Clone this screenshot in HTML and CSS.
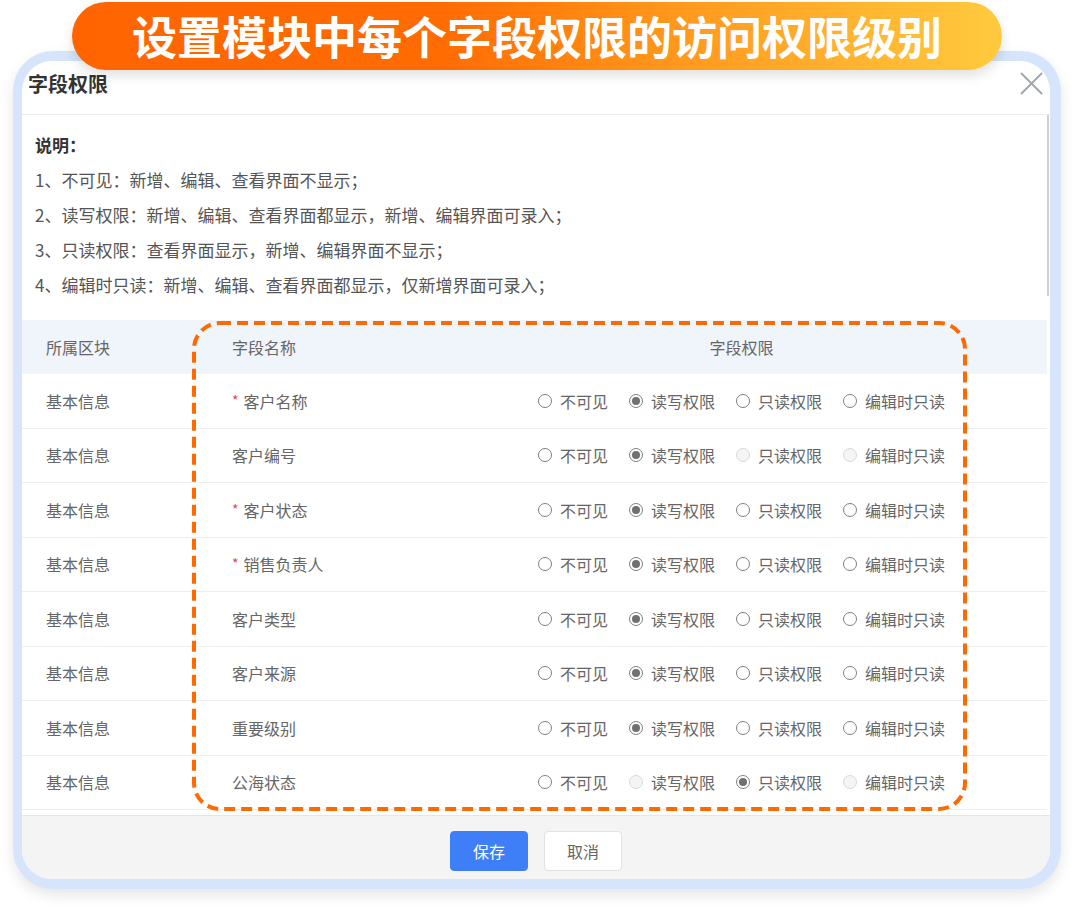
FILE: index.html
```html
<!DOCTYPE html>
<html lang="zh-CN">
<head>
<meta charset="utf-8">
<title>字段权限</title>
<link rel="stylesheet" href="styles.css">
</head>
<body>
<div class="stage">
  <div class="frame">
    <div class="dialog">
      <div class="dlg-head">
        <span class="dlg-title">字段权限</span>
        <svg class="close" viewBox="0 0 24 24"><path d="M2 1 L23 22 M23 1 L2 22" stroke="#a0a4ab" stroke-width="1.8" fill="none"/></svg>
      </div>
      <div class="dlg-body">
        <div class="scroll">
          <div class="desc">
            <div class="desc-title">说明：</div>
            <div>1、不可见：新增、编辑、查看界面不显示；</div>
            <div>2、读写权限：新增、编辑、查看界面都显示，新增、编辑界面可录入；</div>
            <div>3、只读权限：查看界面显示，新增、编辑界面不显示；</div>
            <div>4、编辑时只读：新增、编辑、查看界面都显示，仅新增界面可录入；</div>
          </div>
          <div class="table">
            <div class="tr th">
              <div class="c1">所属区块</div>
              <div class="c2">字段名称</div>
              <div class="c3 center">字段权限</div>
            </div>
            <div class="tr">
              <div class="c1">基本信息</div>
              <div class="c2"><span class="req">*</span>客户名称</div>
              <div class="c3">
                <span class="radio"><i class="dot"></i>不可见</span>
                <span class="radio"><i class="dot on"></i>读写权限</span>
                <span class="radio"><i class="dot"></i>只读权限</span>
                <span class="radio"><i class="dot"></i>编辑时只读</span>
              </div>
            </div>
            <div class="tr">
              <div class="c1">基本信息</div>
              <div class="c2">客户编号</div>
              <div class="c3">
                <span class="radio"><i class="dot"></i>不可见</span>
                <span class="radio"><i class="dot on"></i>读写权限</span>
                <span class="radio"><i class="dot off"></i>只读权限</span>
                <span class="radio"><i class="dot off"></i>编辑时只读</span>
              </div>
            </div>
            <div class="tr">
              <div class="c1">基本信息</div>
              <div class="c2"><span class="req">*</span>客户状态</div>
              <div class="c3">
                <span class="radio"><i class="dot"></i>不可见</span>
                <span class="radio"><i class="dot on"></i>读写权限</span>
                <span class="radio"><i class="dot"></i>只读权限</span>
                <span class="radio"><i class="dot"></i>编辑时只读</span>
              </div>
            </div>
            <div class="tr">
              <div class="c1">基本信息</div>
              <div class="c2"><span class="req">*</span>销售负责人</div>
              <div class="c3">
                <span class="radio"><i class="dot"></i>不可见</span>
                <span class="radio"><i class="dot on"></i>读写权限</span>
                <span class="radio"><i class="dot"></i>只读权限</span>
                <span class="radio"><i class="dot"></i>编辑时只读</span>
              </div>
            </div>
            <div class="tr">
              <div class="c1">基本信息</div>
              <div class="c2">客户类型</div>
              <div class="c3">
                <span class="radio"><i class="dot"></i>不可见</span>
                <span class="radio"><i class="dot on"></i>读写权限</span>
                <span class="radio"><i class="dot"></i>只读权限</span>
                <span class="radio"><i class="dot"></i>编辑时只读</span>
              </div>
            </div>
            <div class="tr">
              <div class="c1">基本信息</div>
              <div class="c2">客户来源</div>
              <div class="c3">
                <span class="radio"><i class="dot"></i>不可见</span>
                <span class="radio"><i class="dot on"></i>读写权限</span>
                <span class="radio"><i class="dot"></i>只读权限</span>
                <span class="radio"><i class="dot"></i>编辑时只读</span>
              </div>
            </div>
            <div class="tr">
              <div class="c1">基本信息</div>
              <div class="c2">重要级别</div>
              <div class="c3">
                <span class="radio"><i class="dot"></i>不可见</span>
                <span class="radio"><i class="dot on"></i>读写权限</span>
                <span class="radio"><i class="dot"></i>只读权限</span>
                <span class="radio"><i class="dot"></i>编辑时只读</span>
              </div>
            </div>
            <div class="tr">
              <div class="c1">基本信息</div>
              <div class="c2">公海状态</div>
              <div class="c3">
                <span class="radio"><i class="dot"></i>不可见</span>
                <span class="radio"><i class="dot off"></i>读写权限</span>
                <span class="radio"><i class="dot on"></i>只读权限</span>
                <span class="radio"><i class="dot off"></i>编辑时只读</span>
              </div>
            </div>
            <div class="tr tr-next"></div>
          </div>
        </div>
        <div class="scrollbar"><div class="thumb"></div></div>
      </div>
      <div class="dlg-foot">
        <button class="btn primary">保存</button>
        <button class="btn">取消</button>
      </div>
    </div>
  </div>
  <div class="banner">设置模块中每个字段权限的访问权限级别</div>
  <svg class="highlight" viewBox="0 0 780 494"><rect x="4" y="4" width="771" height="486" rx="26" ry="26" fill="none" stroke="#ff6a00" stroke-width="4" stroke-dasharray="11 6"/></svg>
</div>
</body>
</html>
```

FILE: styles.css
```css
html, body {
  margin: 0;
  background: #ffffff;
}
body {
  font-family: "Noto Sans CJK SC", "Microsoft YaHei", sans-serif;
}
.stage {
  position: relative;
  width: 1080px;
  height: 908px;
  overflow: hidden;
  padding-top: 51px;
  box-sizing: border-box;
}
.frame {
  margin-left: 13px;
  width: 1048px;
  height: 838px;
  box-sizing: border-box;
  padding: 10px 11px 10px 9px;
  background: #d6e5fc;
  border-radius: 40px;
  box-shadow: 0 6px 14px rgba(0, 0, 0, 0.10);
}
.dialog {
  height: 100%;
  background: #ffffff;
  border-radius: 30px;
  overflow: hidden;
  display: flex;
  flex-direction: column;
}
.dlg-head {
  height: 54px;
  flex: none;
  box-sizing: border-box;
  border-bottom: 1px solid #ececec;
  display: flex;
  justify-content: space-between;
  align-items: flex-start;
  padding: 11px 7px 0 6px;
}
.dlg-title {
  font-size: 20px;
  line-height: 24px;
  font-weight: 700;
  color: #333333;
}
.close {
  width: 24px;
  height: 24px;
}
.dlg-body {
  flex: 1;
  min-height: 0;
  display: flex;
  overflow: hidden;
}
.scroll {
  flex: 1;
  overflow: hidden;
}
.scrollbar {
  width: 3px;
  flex: none;
}
.thumb {
  width: 2px;
  height: 181px;
  background: #cfcfcf;
}
.desc {
  padding: 12px 0 18px 13px;
  font-size: 17px;
  line-height: 35px;
  color: #555555;
}
.desc-title {
  font-weight: 700;
  color: #333333;
}
.tr {
  display: flex;
  align-items: center;
  height: 54.5px;
  box-sizing: border-box;
  border-bottom: 1px solid #eeeeee;
  font-size: 16px;
  color: #666666;
}
.th {
  height: 54px;
  background: #f0f4fb;
  border-bottom: none;
}
.c1 {
  width: 187px;
  flex: none;
  box-sizing: border-box;
  padding-left: 24px;
}
.c2 {
  width: 227px;
  flex: none;
  box-sizing: border-box;
  padding-left: 23px;
  display: flex;
  align-items: center;
}
.c3 {
  flex: 1;
  display: flex;
  justify-content: center;
  align-items: center;
  gap: 21px;
}
.req {
  color: #e5484d;
  font-size: 14px;
  margin-right: 5px;
  position: relative;
  top: -1px;
}
.radio {
  display: flex;
  align-items: center;
  gap: 8px;
}
.dot {
  width: 14px;
  height: 14px;
  box-sizing: border-box;
  border: 1.3px solid #7f7f7f;
  border-radius: 50%;
  background: #ffffff;
  display: flex;
  align-items: center;
  justify-content: center;
}
.dot.on::after {
  content: "";
  width: 8px;
  height: 8px;
  border-radius: 50%;
  background: #707070;
}
.dot.off {
  border-color: #d9d9d9;
  background: #f5f5f5;
}
.dlg-foot {
  height: 64px;
  flex: none;
  box-sizing: border-box;
  background: #f4f4f4;
  border-top: 1px solid #e6e6e6;
  display: flex;
  justify-content: center;
  align-items: flex-start;
  gap: 16px;
  padding-top: 15px;
}
.btn {
  width: 78px;
  height: 40px;
  border-radius: 4px;
  font-family: inherit;
  font-size: 16px;
  border: 1px solid #e2e2e2;
  background: #ffffff;
  color: #666666;
  padding: 0;
}
.btn.primary {
  background: #3e7ff7;
  border-color: #3e7ff7;
  color: #ffffff;
}
.banner {
  position: absolute;
  left: 72px;
  top: 2px;
  width: 930px;
  height: 68px;
  border-radius: 34px;
  background: linear-gradient(90deg, #ff6400 0%, #ff6c02 40%, #ff9a1e 66%, #ffca3e 100%);
  color: #ffffff;
  font-size: 45px;
  font-weight: 700;
  line-height: 68px;
  text-align: center;
  box-shadow: 0 6px 12px rgba(0, 0, 0, 0.12);
}
.highlight {
  position: absolute;
  left: 190px;
  top: 319px;
  width: 780px;
  height: 494px;
}
```
